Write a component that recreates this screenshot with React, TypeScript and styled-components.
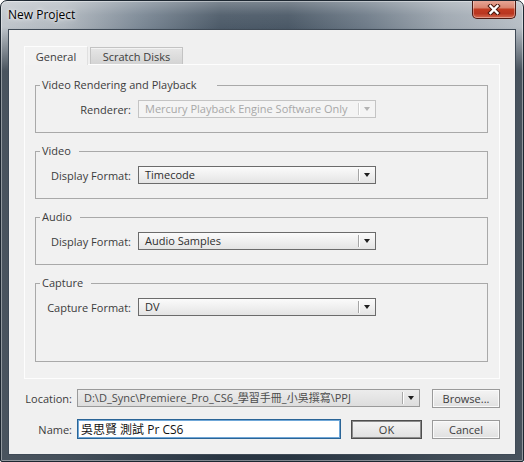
import React from "react";
import styled, { createGlobalStyle } from "styled-components";

const Global = createGlobalStyle`
  html, body { margin: 0; padding: 0; background: #ffffff; }
  body {
    width: 524px;
    height: 462px;
    overflow: hidden;
    font-family: "Open Sans", "Noto Sans CJK TC", sans-serif;
  }
  * { box-sizing: border-box; }
`;

const Window = styled.div`
  width: 524px;
  height: 462px;
  display: flex;
  flex-direction: column;
  border: 1px solid #1d2731;
  border-radius: 7px 7px 2px 2px;
  overflow: hidden;
  background:
    linear-gradient(to bottom, rgba(255,255,255,0.28) 0px, rgba(255,255,255,0.06) 14px, rgba(255,255,255,0) 28px),
    linear-gradient(to bottom, rgba(28,40,52,0) 0px, rgba(28,40,52,0) 26px, rgba(28,40,52,0.72) 70px, rgba(28,40,52,0.72) 100%),
    linear-gradient(to right, #bfc5cb 0%, #b1b8bf 12%, #7a8794 27%, #4c5a68 42%, #4a5866 55%, #6e7b88 70%, #9ea7b0 85%, #b8bfc6 100%);
  box-shadow: inset 0 0 0 1px rgba(255,255,255,0.4);
`;

const TitleBar = styled.div`
  height: 28px;
  flex: none;
  display: flex;
  justify-content: space-between;
  align-items: flex-start;
  padding-left: 7px;
`;

const Title = styled.div`
  font-size: 12px;
  line-height: 28px;
  color: #000;
  text-shadow: 0 0 6px rgba(255,255,255,0.95), 0 0 3px rgba(255,255,255,0.8);
`;

const CloseButton = styled.div`
  width: 44px;
  height: 19px;
  margin-right: 7px;
  margin-top: -1px;
  display: flex;
  align-items: center;
  justify-content: center;
  border: 1px solid #4e1a12;
  border-top: none;
  border-radius: 0 0 5px 5px;
  background: linear-gradient(to bottom, #e9aa9b 0%, #d98570 42%, #c23b21 52%, #b93620 75%, #d46a50 100%);
  box-shadow: inset 0 0 0 1px rgba(255,255,255,0.35);
`;

const Client = styled.div`
  flex: 1;
  margin: 0 7px 7px 7px;
  border: 1px solid #3f4a56;
  background: #f0f0f0;
  padding: 16px 15px 15px 15px;
  display: flex;
  flex-direction: column;
`;

const Tabs = styled.div`
  display: flex;
  align-items: flex-end;
  gap: 2px;
  margin-bottom: -1px;
  position: relative;
  z-index: 1;
`;

const Tab = styled.div<{ $active?: boolean; $w: number }>`
  width: ${(p) => p.$w}px;
  height: ${(p) => (p.$active ? 19 : 17)}px;
  margin-bottom: ${(p) => (p.$active ? 0 : 1)}px;
  display: flex;
  align-items: center;
  justify-content: center;
  font-size: 11px;
  color: #3c3c3c;
  border: 1px solid;
  border-bottom: none;
  border-color: ${(p) => (p.$active ? "#fdfdfd #e0e0e0 transparent #fdfdfd" : "#c3c3c3")};
  background: ${(p) => (p.$active ? "#f2f2f2" : "linear-gradient(to bottom, #e6e6e6, #d4d4d4)")};
  box-shadow: ${(p) => (p.$active ? "none" : "inset 0 1px 0 #f3f3f3")};
`;

const Panel = styled.div`
  height: 315px;
  flex: none;
  border: 1px solid #fdfdfd;
  background: #f1f1f1;
  padding: 12px 11px 16px 10px;
  display: flex;
  flex-direction: column;
  gap: 10px;
`;

const Group = styled.fieldset<{ $h: number }>`
  margin: 0;
  padding: 7px 0 0 0;
  min-width: 0;
  height: ${(p) => p.$h}px;
  border: 1px solid #a9a9a9;
`;

const Legend = styled.legend<{ $trail?: number }>`
  margin-left: 4px;
  padding: 0 ${(p) => p.$trail ?? 8}px 0 2px;
  font-size: 11px;
  line-height: 16px;
  color: #3c3c3c;
`;

const Row = styled.div`
  display: flex;
  align-items: center;
  height: 18px;
`;

const FieldLabel = styled.div`
  width: 95px;
  margin-right: 7px;
  text-align: right;
  font-size: 11px;
  color: #3c3c3c;
  white-space: nowrap;
`;

type Variant = "normal" | "disabled" | "path";

const selectTheme: Record<Variant, { border: string; bg: string; text: string; arrow: string; sep: string }> = {
  normal: {
    border: "#6b6b6b",
    bg: "linear-gradient(to bottom, #fbfbfb, #e4e4e4)",
    text: "#2e2e2e",
    arrow: "#1e1e1e",
    sep: "#a5a5a5",
  },
  disabled: {
    border: "#c4c4c4",
    bg: "#f4f4f4",
    text: "#a8a8a8",
    arrow: "#b3b3b3",
    sep: "#d2d2d2",
  },
  path: {
    border: "#9a9a9a",
    bg: "linear-gradient(to bottom, #ececec, #dddddd)",
    text: "#4c4c4c",
    arrow: "#1e1e1e",
    sep: "#a8a8a8",
  },
};

const SelectBox = styled.div<{ $v: Variant; $w: number }>`
  width: ${(p) => p.$w}px;
  height: 18px;
  flex: none;
  display: flex;
  align-items: center;
  border: 1px solid ${(p) => selectTheme[p.$v].border};
  background: ${(p) => selectTheme[p.$v].bg};
`;

const SelectText = styled.div<{ $v: Variant }>`
  flex: 1;
  padding-left: 6px;
  font-size: 11px;
  line-height: 16px;
  color: ${(p) => selectTheme[p.$v].text};
  white-space: nowrap;
  overflow: hidden;
`;

const ArrowZone = styled.div<{ $v: Variant }>`
  width: 17px;
  height: 12px;
  flex: none;
  display: flex;
  align-items: center;
  justify-content: center;
  border-left: 1px solid ${(p) => selectTheme[p.$v].sep};
  box-shadow: inset 1px 0 0 #ffffff;
`;

const Triangle = styled.span<{ $v: Variant }>`
  width: 0;
  height: 0;
  border-left: 3px solid transparent;
  border-right: 3px solid transparent;
  border-top: 4px solid ${(p) => selectTheme[p.$v].arrow};
`;

const Footer = styled.div`
  margin-top: 10px;
  display: flex;
  flex-direction: column;
  gap: 12px;
`;

const FooterRow = styled.div<{ $h: number }>`
  display: flex;
  align-items: center;
  height: ${(p) => p.$h}px;
`;

const FooterLabel = styled.div`
  width: 48px;
  margin-right: 5px;
  text-align: right;
  font-size: 11px;
  color: #3c3c3c;
  white-space: nowrap;
`;

const Button = styled.button<{ $w: number; $default?: boolean; $ml: number }>`
  width: ${(p) => p.$w}px;
  height: 19px;
  margin: 0 0 0 ${(p) => p.$ml}px;
  padding: 0;
  flex: none;
  font-family: "Open Sans", sans-serif;
  font-size: 11px;
  color: #3c3c3c;
  border: 1px solid ${(p) => (p.$default ? "#4e4e4e" : "#9a9a9a")};
  box-shadow: ${(p) => (p.$default ? "inset 0 0 0 1px #8c8c8c" : "inset 0 0 0 1px #fafafa")};
  background: linear-gradient(to bottom, #f4f4f4, #e0e0e0);
  border-radius: 0;
`;

const NameInput = styled.input`
  width: 264px;
  height: 20px;
  flex: none;
  margin: 0;
  padding: 0 0 0 3px;
  border: 1px solid #2a6496;
  box-shadow: inset 0 0 0 1px #6fa7d8;
  background: #ffffff;
  font-family: "Open Sans", "Noto Sans CJK TC", sans-serif;
  font-size: 12px;
  color: #111111;
  outline: none;
`;

function Select({ v, w, text }: { v: Variant; w: number; text: string }) {
  return (
    <SelectBox $v={v} $w={w}>
      <SelectText $v={v}>{text}</SelectText>
      <ArrowZone $v={v}>
        <Triangle $v={v} />
      </ArrowZone>
    </SelectBox>
  );
}

function CloseIcon() {
  return (
    <svg width="14" height="11" viewBox="0 0 14 11">
      <path d="M3.5 2 L10.5 9 M10.5 2 L3.5 9" stroke="#4a1a10" strokeWidth="4.4" strokeLinecap="square" />
      <path d="M3.5 2 L10.5 9 M10.5 2 L3.5 9" stroke="#ffffff" strokeWidth="2.4" strokeLinecap="square" />
    </svg>
  );
}

const groups = [
  { title: "Video Rendering and Playback", trail: 20, h: 56, label: "Renderer:", v: "disabled" as Variant, value: "Mercury Playback Engine Software Only" },
  { title: "Video", trail: 8, h: 56, label: "Display Format:", v: "normal" as Variant, value: "Timecode" },
  { title: "Audio", trail: 8, h: 56, label: "Display Format:", v: "normal" as Variant, value: "Audio Samples" },
  { title: "Capture", trail: 8, h: 87, label: "Capture Format:", v: "normal" as Variant, value: "DV" },
];

export default function App() {
  return (
    <>
      <Global />
      <Window>
        <TitleBar>
          <Title>New Project</Title>
          <CloseButton>
            <CloseIcon />
          </CloseButton>
        </TitleBar>
        <Client>
          <Tabs>
            <Tab $active $w={64}>General</Tab>
            <Tab $w={93}>Scratch Disks</Tab>
          </Tabs>
          <Panel>
            {groups.map((g) => (
              <Group key={g.title} $h={g.h}>
                <Legend $trail={g.trail}>{g.title}</Legend>
                <Row>
                  <FieldLabel>{g.label}</FieldLabel>
                  <Select v={g.v} w={238} text={g.value} />
                </Row>
              </Group>
            ))}
          </Panel>
          <Footer>
            <FooterRow $h={18}>
              <FooterLabel>Location:</FooterLabel>
              <Select v="path" w={343} text="D:\D_Sync\Premiere_Pro_CS6_學習手冊_小吳撰寫\PPJ" />
              <Button $w={68} $ml={12}>Browse...</Button>
            </FooterRow>
            <FooterRow $h={20}>
              <FooterLabel>Name:</FooterLabel>
              <NameInput readOnly defaultValue="吳思賢 測試 Pr CS6" />
              <Button $w={71} $ml={10} $default>OK</Button>
              <Button $w={68} $ml={10}>Cancel</Button>
            </FooterRow>
          </Footer>
        </Client>
      </Window>
    </>
  );
}
